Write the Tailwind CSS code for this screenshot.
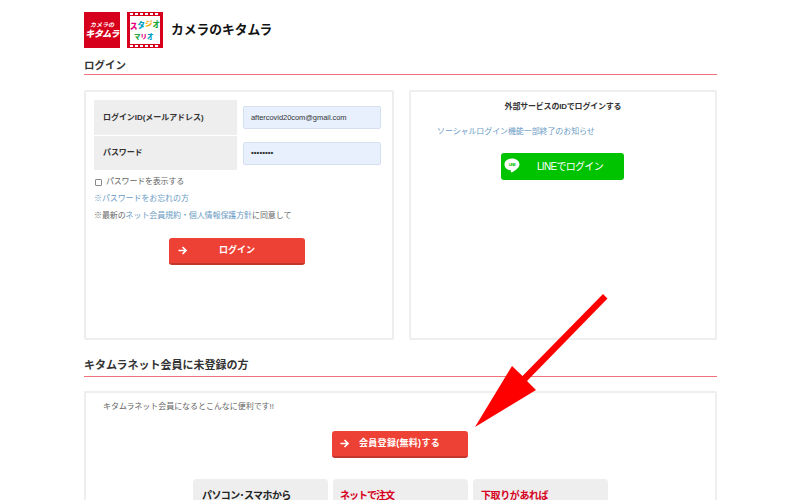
<!DOCTYPE html>
<html lang="ja">
<head>
    <meta charset="UTF-8">
    <meta name="viewport" content="width=device-width, initial-scale=1.0">
    <title>ログイン</title>
    <script src="https://cdn.jsdelivr.net/npm/@tailwindcss/browser@4"></script>
</head>
<body class="relative h-[500px] overflow-hidden bg-white text-[#333] font-['Liberation_Sans','Noto_Sans_CJK_JP',sans-serif]">
    <div class="ml-[84px] w-[633px]">
        <!-- Header -->
        <div class="flex h-[48px] items-end">
            <div class="flex h-[36px] w-[36px] flex-col items-center justify-center bg-[#d6001c] text-white">
                <span class="text-[6px] leading-[8px] font-bold italic">カメラの</span>
                <span class="text-[9px] leading-[10px] font-black italic whitespace-nowrap tracking-[-0.5px]">キタムラ</span>
            </div>
            <svg class="ml-[7px]" width="36" height="36" viewBox="0 0 36 36">
                <rect width="36" height="36" fill="#d6001c"/>
                <rect x="3" y="4" width="30" height="28" fill="#fff"/>
                <g fill="#fff">
                    <rect x="3" y="1" width="3" height="2"/><rect x="8" y="1" width="3" height="2"/><rect x="13" y="1" width="3" height="2"/><rect x="18" y="1" width="3" height="2"/><rect x="23" y="1" width="3" height="2"/><rect x="28" y="1" width="3" height="2"/>
                    <rect x="3" y="33" width="3" height="2"/><rect x="8" y="33" width="3" height="2"/><rect x="13" y="33" width="3" height="2"/><rect x="18" y="33" width="3" height="2"/><rect x="23" y="33" width="3" height="2"/><rect x="28" y="33" width="3" height="2"/>
                </g>
                <g font-family="Noto Sans CJK JP" font-weight="900" font-size="7.5">
                    <text x="3" y="17" fill="#e6007e">ス</text><text x="10.5" y="16" fill="#00a0c6">タ</text><text x="18" y="15" fill="#f5a800">ジ</text><text x="25.5" y="15" fill="#22a83a">オ</text>
                </g>
                <g font-family="Noto Sans CJK JP" font-weight="900" font-size="6.5">
                    <text x="7" y="27" fill="#22a83a">マ</text><text x="13.5" y="27" fill="#e6007e">リ</text><text x="20" y="27" fill="#00a0c6">オ</text>
                </g>
            </svg>
            <span class="ml-[8px] mb-[9px] text-[12.75px] leading-[18px] font-bold text-[#111]">カメラのキタムラ</span>
        </div>

        <!-- Login -->
        <h2 class="mt-[9px] h-[18px] border-b border-[#f0737c] text-[10.5px] leading-[16px] font-bold">ログイン</h2>
        <div class="mt-[15px] flex gap-[15px]">
            <div class="h-[250px] w-[310px] rounded-[2px] border-2 border-[#eee] pt-[8px] pl-[8px]">
                <div class="flex h-[36px] items-start">
                    <div class="flex h-[35px] w-[143px] items-center bg-[#eee] pl-[9px] text-[8px] font-bold tracking-[-0.05px]">ログインID(メールアドレス)</div>
                    <div class="mt-[6px] ml-[6px] flex h-[23px] w-[138px] items-center rounded-[2px] border border-[#d5dfee] bg-[#e8f0fe] pl-[7px] text-[7.5px] tracking-[-0.05px]">aftercovid20com@gmail.com</div>
                </div>
                <div class="flex h-[34px] items-center">
                    <div class="flex h-[34px] w-[143px] items-center bg-[#eee] pl-[9px] text-[8px] font-bold tracking-[-0.1px]">パスワード</div>
                    <div class="ml-[6px] flex h-[23px] w-[138px] items-center rounded-[2px] border border-[#d5dfee] bg-[#e8f0fe] pl-[7px] text-[8px] leading-none font-bold">••••••••</div>
                </div>
                <div class="mt-[7px] flex h-[10px] items-center text-[8px] tracking-[-0.2px] text-[#666]">
                    <span class="ml-[1px] h-[7px] w-[7px] rounded-[1px] border border-[#888] bg-white"></span>
                    <span class="ml-[4px]">パスワードを表示する</span>
                </div>
                <p class="mt-[7px] text-[8px] leading-[10px] tracking-[-0.1px] text-[#6b9bc4]">※パスワードをお忘れの方</p>
                <p class="mt-[7px] text-[8px] leading-[10px] tracking-[-0.1px] text-[#666]">※最新の<span class="text-[#6b9bc4]">ネット会員規約・個人情報保護方針</span>に同意して</p>
                <div class="relative mt-[17px] ml-[75px] flex h-[27px] w-[136px] items-center justify-center rounded-[3px] border-b-2 border-[#c4362b] bg-[#ee4135] text-[9px] font-bold text-white">
                    <svg class="absolute top-[8px] left-[9px]" width="9" height="9" viewBox="0 0 9 9" fill="none" stroke="#fff" stroke-width="1.6"><path d="M0.5 4.5H8M4.5 1L8 4.5L4.5 8"/></svg>
                    ログイン
                </div>
            </div>
            <div class="h-[250px] w-[308px] rounded-[2px] border-2 border-[#eee]">
                <p class="mt-[10px] text-center text-[8px] leading-[10px] font-bold tracking-[-0.2px]">外部サービスのIDでログインする</p>
                <p class="mt-[15px] ml-[26px] text-[8px] leading-[10px] tracking-[-0.1px] text-[#6b9bc4] whitespace-nowrap">ソーシャルログイン機能一部終了のお知らせ</p>
                <div class="relative mt-[16px] ml-[90px] flex h-[27px] w-[123px] items-center rounded-[3px] bg-[#00c300] pl-[36px] text-[10px] tracking-[-0.7px] text-white">
                    <svg class="absolute top-[5px] left-[3px]" width="16" height="16" viewBox="0 0 16 16">
                        <path fill="#fff" d="M8 0.5C3.8 0.5 0.5 3 0.5 6.4C0.5 9.4 3.1 11.8 6.6 12.2C7.2 12.3 7 13.2 6.9 13.8C6.8 14.4 7.2 14.6 7.8 14.3C9.5 13.4 15.5 10 15.5 6.4C15.5 3 12.2 0.5 8 0.5Z"/>
                        <text x="8" y="8.2" text-anchor="middle" font-family="Liberation Sans" font-weight="700" font-size="4" fill="#00c300">LINE</text>
                    </svg>
                    LINEでログイン
                </div>
            </div>
        </div>

        <!-- Register -->
        <h2 class="mt-[16px] h-[21px] border-b border-[#f0737c] text-[11px] leading-[19px] font-bold">キタムラネット会員に未登録の方</h2>
        <div class="mt-[14px] h-[109px] rounded-t-[2px] border-x-2 border-t-2 border-[#eee]">
            <p class="mt-[9px] ml-[17px] text-[8px] leading-[10px] tracking-[-0.05px] text-[#666]">キタムラネット会員になるとこんなに便利です!!</p>
            <div class="relative mt-[19px] ml-[246px] flex h-[27px] w-[136px] items-center rounded-[3px] border-b-2 border-[#c4362b] bg-[#ee4135] pl-[27px] text-[9px] font-bold tracking-[0.3px] text-white">
                <svg class="absolute top-[8px] left-[8px]" width="9" height="9" viewBox="0 0 9 9" fill="none" stroke="#fff" stroke-width="1.6"><path d="M0.5 4.5H8M4.5 1L8 4.5L4.5 8"/></svg>
                会員登録(無料)する
            </div>
            <div class="mt-[21px] ml-[107px] flex gap-[5px]">
                <div class="h-[22px] w-[135px] rounded-t-[4px] bg-[#eee] pt-[11px] pl-[9px] text-[10px] leading-[11px] font-bold tracking-[-0.6px] text-[#222]">パソコン･スマホから</div>
                <div class="h-[22px] w-[135px] rounded-t-[4px] bg-[#eee] pt-[11px] pl-[7px] text-[10px] leading-[11px] font-bold tracking-[-1px] text-[#d6001c]">ネットで注文</div>
                <div class="h-[22px] w-[135px] rounded-t-[4px] bg-[#eee] pt-[11px] pl-[8px] text-[10px] leading-[11px] font-bold tracking-[-0.4px] text-[#d6001c]">下取りがあれば</div>
            </div>
        </div>
    </div>

    <!-- Annotation arrow -->
    <svg class="absolute top-0 left-0" width="800" height="500" viewBox="0 0 800 500">
        <polygon fill="#ff0000" points="603,294 607.5,298.5 527,381 536,390 475,427 512,366 522.5,376"/>
    </svg>
</body>
</html>
